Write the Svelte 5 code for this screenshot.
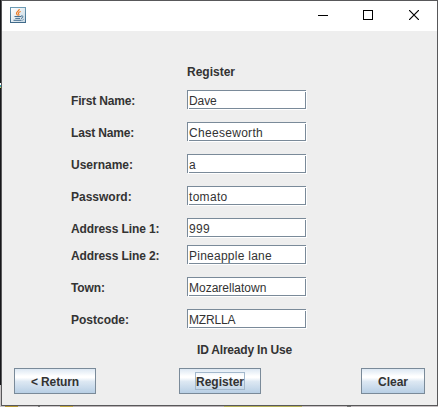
<script>
  const fields = [
    { label: 'First Name:', value: 'Dave', gap: 12, ls: -0.17, vs: -0.1 },
    { label: 'Last Name:', value: 'Cheeseworth', gap: 12, ls: -0.16, vs: 0.3 },
    { label: 'Username:', value: 'a', gap: 12, ls: 0, vs: 0 },
    { label: 'Password:', value: 'tomato', gap: 12, ls: 0, vs: 0.3 },
    { label: 'Address Line 1:', value: '999', gap: 7, ls: -0.11, vs: 0.3 },
    { label: 'Address Line 2:', value: 'Pineapple lane', gap: 12, ls: -0.11, vs: 0.25 },
    { label: 'Town:', value: 'Mozarellatown', gap: 12, ls: -0.1, vs: 0 },
    { label: 'Postcode:', value: 'MZRLLA', gap: 0, ls: 0, vs: -0.15 }
  ];
</script>

<div class="desktop">
  <div class="window">
    <header>
      <svg class="java" width="16" height="16" viewBox="0 0 16 16">
        <defs>
          <linearGradient id="tile" x1="0" y1="0" x2="0" y2="1">
            <stop offset="0" stop-color="#6d9cb5" />
            <stop offset="1" stop-color="#3e6888" />
          </linearGradient>
          <linearGradient id="face" x1="0" y1="0" x2="1" y2="1">
            <stop offset="0" stop-color="#ffffff" />
            <stop offset="1" stop-color="#c9d9e3" />
          </linearGradient>
        </defs>
        <rect width="16" height="16" fill="url(#tile)" />
        <rect x="1" y="1" width="14" height="14" fill="url(#face)" />
        <path d="M9.300 2C9.500 4 6 4.500 6.500 6.500C6.700 7.300 7.500 7.500 7.500 8.500M10.700 4.500C8 5.500 8 6.300 8.800 7.200C9.200 7.700 8.800 8.300 8.400 8.600" fill="none" stroke="#ee7a22" stroke-width="1.100" />
        <path d="M4.500 9.500H11M5.300 11.400H10M3.500 13.300H11.500" stroke="#456f91" stroke-width="1" />
        <path d="M11 9C13.800 8.300 13.400 11 11 11.500M12.500 13.200L13.500 12.400" fill="none" stroke="#456f91" />
      </svg>
      <div class="controls">
        <svg width="10" height="10" viewBox="0 0 10 10"><path d="M0 5.500H10" stroke="#000" /></svg>
        <svg width="10" height="10" viewBox="0 0 10 10"><rect x=".5" y=".5" width="9" height="9" fill="none" stroke="#000" /></svg>
        <svg class="close" width="10" height="10" viewBox="0 0 10 10"><path d="M0 0L10 10M10 0L0 10" stroke="#000" stroke-width="1.200" /></svg>
      </div>
    </header>
    <main>
      <h1><span>Register</span></h1>
      <form>
        {#each fields as f}
          <div class="row" style:margin-bottom="{f.gap}px">
            <span class="label" style:letter-spacing="{f.ls}px">{f.label}</span>
            <span class="field"><span style:letter-spacing="{f.vs}px">{f.value}</span></span>
          </div>
        {/each}
      </form>
      <p>ID Already In Use</p>
      <div class="buttons">
        <button class="return">&lt; Return</button>
        <button class="register"><span class="focus">Register</span></button>
        <button class="clear">Clear</button>
      </div>
    </main>
  </div>
</div>

<style>
  :global(body) { overflow: hidden; }
  .desktop {
    width: 438px; height: 407px; box-sizing: border-box; padding-left: 1px;
    background:
      linear-gradient(90deg, transparent 5px, #b99b35 5px 18px, #c9c5c6 18px 38px, #777 38px 40px, #c9c5c6 40px 60px, #c3a944 60px 73px, #b8b2b4 73px 224px, #b9b45a 224px 302px, #c6c0c2 302px 347px, #777 347px 351px, #c6c0c2 351px) 0 406px / 438px 1px no-repeat,
      linear-gradient(#fff 0 2px, #3da0aa 2px 4px, #c8cc55 4px 5px, #111 5px) 0 83px / 1px 6px no-repeat,
      linear-gradient(#17171a 0 385px, #c9c5c6 385px);
    font-family: "Liberation Sans", Arial, sans-serif; font-size: 12px; color: #333;
  }
  .window { width: 437px; height: 406px; box-sizing: border-box; border: 1px solid #58585a; background: #eee; display: flex; flex-direction: column; }
  header { height: 30px; flex: none; background: #fff; display: flex; justify-content: space-between; }
  .java { margin: 6px 0 0 8px; }
  .controls { display: flex; gap: 35px; padding: 9px 18px 0 0; }
  .controls svg { display: block; width: 10px; height: 10px; }
  .controls .close { margin-left: 1px; }
  main { flex: 1; display: flex; flex-direction: column; }
  h1, p { margin: 0; font-size: 12px; font-weight: bold; line-height: 16px; white-space: nowrap; }
  h1 { padding: 33px 0 0 185px; height: 26px; }
  form { padding-left: 69px; }
  .row { display: flex; height: 20px; }
  .label { width: 116px; font-weight: bold; line-height: 23px; white-space: nowrap; }
  .field {
    width: 120px; height: 20px; box-sizing: border-box; padding: 0 1px 1px 0; display: flex;
    background: linear-gradient(#fff, #fff) 1px 1px / 119px 19px no-repeat;
  }
  .field span {
    flex: 1; box-sizing: border-box; padding: 2px 1px 0 2px; line-height: 18px; white-space: nowrap;
    background:
      linear-gradient(#7a8a99, #7a8a99) 0 0 / 100% 1px no-repeat,
      linear-gradient(#7a8a99, #7a8a99) 0 0 / 1px 100% no-repeat,
      linear-gradient(#7a8a99, #7a8a99) 2px 100% / 117px 1px no-repeat,
      linear-gradient(#7a8a99, #7a8a99) 100% 2px / 1px 17px no-repeat,
      #fff;
  }
  p { padding: 13px 0 0 195px; height: 26px; letter-spacing: -.2px; }
  .buttons { display: flex; padding-left: 12px; }
  button {
    height: 26px; box-sizing: border-box; border: 1px solid #7a8a99; padding: 2px 0 0; margin: 0; border-radius: 0;
    background: linear-gradient(#dde8f3 0%, #fff 30%, #fff 36%, #dde8f3 52%, #b8cfe5 100%);
    font: bold 12px "Liberation Sans", Arial, sans-serif; color: #333;
    display: flex; align-items: center; justify-content: center;
  }
  .return { width: 82px; letter-spacing: -.1px; }
  .register { width: 82px; margin-left: 83px; padding: 0; }
  .clear { width: 64px; margin-left: 100px; }
  .focus { border: 1px solid #a3b8cc; height: 16px; line-height: 18px; width: 48px; text-align: center; }
</style>
